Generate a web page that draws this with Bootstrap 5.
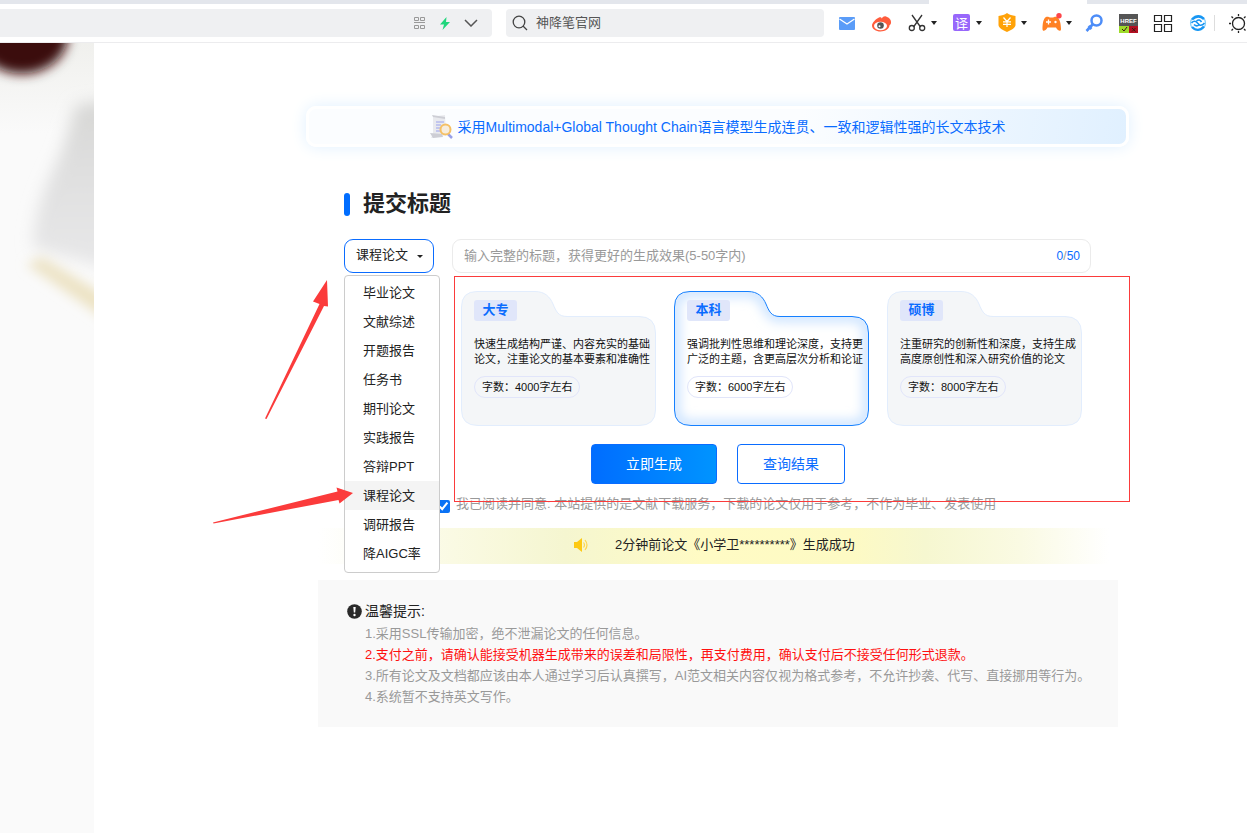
<!DOCTYPE html>
<html lang="zh-CN">
<head>
<meta charset="utf-8">
<meta name="viewport" content="width=device-width, initial-scale=1">
<title>提交标题</title>
<link href="https://cdn.jsdelivr.net/npm/bootstrap@5.3.0/dist/css/bootstrap.min.css" rel="stylesheet">
<style>
  body { font-family: "Liberation Sans", "Noto Sans CJK SC", sans-serif; font-size: 13px; line-height: 20px; color: #222; background: #fff; overflow-x: hidden; }
  button, input { font-family: inherit; }
  /* browser bar */
  .tab-strip { height: 4px; background: #e3e6ec; }
  .tab-strip .tab-active { width: 158px; margin-right: 160px; background: #fff; }
  .toolbar { height: 39px; border-bottom: 1px solid #ececee; overflow: hidden; }
  .field { height: 28px; background: #eff0f2; border-radius: 4px; }
  .address { border-radius: 0 4px 4px 0; padding-right: 14px; gap: 14px; margin-right: 14px; }
  .address svg, .tool svg, .field svg { display: block; flex: none; }
  .search-field { width: 318px; padding-left: 6px; gap: 8px; margin-right: 13px; color: #555; }
  .search-field input { font-size: 13px; color: #555; outline: 0; }
  .tool { border: 0; background: none; padding: 0; display: flex; align-items: center; gap: 4px; }
  .tool-group { gap: 15px; }
  .tool-caret { border: 3px solid transparent; border-top: 4px solid #222; border-bottom: 0; }
  .tool-rule { width: 1px; height: 16px; background: #ddd; margin: 0 13px 0 6px; }
  /* page */
  .photo { width: 94px; flex: none; background: #fafafa; min-height: calc(100vh - 43px); overflow: hidden; }
  .photo svg { display: block; }
  .page-main { padding: 63px 118px 0 212px; min-width: 0; }
  .promo { height: 41px; border: 3px solid #fff; border-radius: 10px; font-size: 14px; color: #0a6cff; gap: 4px;
    background: linear-gradient(100deg, #fbfdff 0%, #fbfdff 60%, #e0f0ff 100%); box-shadow: 0 0 16px #e0f0ff; }
  .submit-area { padding: 44px 0 0 38px; }
  .submit-title { font-size: 22px; line-height: 26px; font-weight: 700; gap: 13px; margin-bottom: 22px; }
  .submit-title::before { content: ""; width: 6px; height: 23px; border-radius: 3px; background: #006dff; }
  .kind-btn { width: 90px; height: 34px; padding: 0 0 3px 11px; font-size: 13px; border: 1px solid #0a6cff; border-radius: 9px; background: #fff; color: #222; text-align: left; }
  .kind-btn::after { margin-left: 9px; border-width: 3px; border-bottom: 0; vertical-align: 1px; }
  .kind-menu { top: 36px; left: 0; width: 96px; min-width: 0; padding: 2px 0 4px; border: 1px solid #ccc; border-radius: 4px; font-size: 13px; }
  .kind-menu .dropdown-item { padding: 4px 0 4px 18px; line-height: 21px; color: #222; }
  .kind-menu .dropdown-item.current { background: #f4f4f4; }
  .title-field { height: 34px; border: 1px solid #ebebeb; border-radius: 9px; padding: 0 10px 1px 11px; margin: 0 38px 0 18px; }
  .title-field input { outline: 0; color: #222; min-width: 0; }
  .title-field input::placeholder { color: #999; opacity: 1; }
  .count { color: #0a6cff; font-size: 12px; }
  .count i { color: #999; font-style: normal; }
  .levels { gap: 18px; padding: 18px 0 18px 117px; }
  .level { width: 195px; height: 135px; padding: 9px 8px 0 13px; border: 0; background: none; color: #111; text-align: left; font-size: 11px; line-height: 15px; }
  .level > svg { left: 0; top: 0; z-index: -1; }
  .level-name { width: 43px; height: 21px; line-height: 20px; border-radius: 3px; background: #e0e6fa; color: #0a6cff; font-size: 13px; font-weight: 700; text-align: center; }
  .level-text { margin: 16px 0 9px; width: 177px; }
  .level-size { height: 22px; line-height: 20px; padding: 0 7px; border: 1px solid #e1e5fa; border-radius: 11px; }
  .actions { gap: 20px; padding-left: 247px; }
  .actions .btn { height: 40px; padding: 0; font-size: 14px; border: 1px solid #0a6cff; border-radius: 4px; }
  .btn-make { width: 126px; color: #fff; background: linear-gradient(90deg, #006dff, #0094ff); }
  .btn-find { width: 108px; color: #0a6cff; background: #fff; }
  .agree { padding-left: 93px; margin-top: 10px; gap: 6px; color: #999; }
  .agree input { width: 13px; height: 13px; margin: 5px 0 0; accent-color: #0a72f5; }
  .ticker { height: 36px; margin: 14px 12px 0; padding: 0 0 2px 256px; gap: 27px; background: linear-gradient(90deg, #fff 0%, #fafae3 17%, #f5f6d0 31%, #fffbc4 48%, #fdfac4 67%, #f6f7d0 76%, #fafae3 88%, #fff 99%); }
  .tips { margin: 16px 11px 0 12px; padding: 21px 24px 20px 29px; background: #f9f9f9; color: #999; line-height: 21px; }
  .tips h2 { font-size: 14px; line-height: 21px; margin: 0; gap: 3px; color: #222; font-weight: 400; }
  .tips ol { list-style: none; margin: 1px 0 0; padding: 0 0 0 18px; }
  .tips .warn { color: #f11; }
  /* hand-drawn marks over the form */
  .mark-box { left: 110px; right: -1px; top: 37px; height: 226px; border: 1px solid #fb3b3b; pointer-events: none; z-index: 1010; }
  .mark-arrows { left: -132px; top: 40px; z-index: 1020; pointer-events: none; }
</style>
</head>
<body>
<header>
  <div class="tab-strip d-flex justify-content-end"><div class="tab-active"></div></div>
  <div class="toolbar d-flex align-items-center">
    <div class="field address d-flex align-items-center justify-content-end flex-grow-1">
      <svg width="13" height="12" viewBox="0 0 13 12" fill="none" stroke="#999"><path d="M1.500.5h4v3h-4zM7.500.5h4v3h-4zM1.500 8.500h4v3h-4zM7.500 8.500h4v3h-4zM1 5.500h11"/></svg>
      <svg width="10" height="13" viewBox="0 0 10 13" fill="#1fd67c"><path d="M6.500 0 0 7.500h4L2.500 13 10 5H6z"/></svg>
      <svg width="14" height="8" viewBox="0 0 14 8" fill="none" stroke="#555" stroke-width="1.500"><path d="m1 1 6 6 6-6"/></svg>
    </div>
    <label class="field search-field d-flex align-items-center">
      <svg width="16" height="16" viewBox="0 0 16 16" fill="none" stroke="#444" stroke-width="1.300"><circle cx="7" cy="7" r="5.800"/><path d="m11 11 4 4"/></svg>
      <input class="border-0 bg-transparent p-0 flex-grow-1" type="text" value="神降笔官网" aria-label="搜索">
    </label>
    <div class="tool-group d-flex align-items-center">
      <button class="tool" aria-label="邮件"><svg width="20" height="20" viewBox="0 0 20 20"><rect x="2" y="4" width="16" height="13" rx="1" fill="#5a9cf8"/><path d="m2.500 6 7.500 5 7.500-5" fill="none" stroke="#fff" stroke-width="1.200"/></svg></button>
      <button class="tool" aria-label="微博"><svg width="20" height="20" viewBox="0 0 20 20"><path d="M0 12.500C0 10 3.500 6 7 4.500c1.500-.6 2.500 0 2.700 1C11 3.500 12.500 3 14 3.500c3 .8 5.500 3.500 5 6.500-.3 1.500-1 2-1.500 2.300C17.500 16 13 18.500 8.500 18.500S0 16 0 12.500z" fill="#ff5c3c"/><ellipse cx="8.500" cy="13" rx="6.500" ry="4.200" fill="#fff"/><circle cx="8.500" cy="12.500" r="3.300" fill="#555"/><circle cx="7.500" cy="13.200" r="1" fill="#fff"/></svg></button>
      <button class="tool" aria-label="截图"><svg width="20" height="20" viewBox="0 0 20 20" fill="none" stroke="#333" stroke-width="1.300"><path d="m5 2 8.500 12M15 2 6.500 14"/><circle cx="4.800" cy="15" r="2.500"/><circle cx="15.200" cy="15" r="2.500"/></svg><span class="tool-caret"></span></button>
      <button class="tool" aria-label="翻译"><svg width="20" height="20" viewBox="0 0 20 20"><rect x="1" y="1" width="17" height="17" rx="2" fill="#9867fb"/><text x="9.500" y="14.500" text-anchor="middle" font-size="13" fill="#fff">译</text></svg><span class="tool-caret"></span></button>
      <button class="tool" aria-label="钱包"><svg width="20" height="20" viewBox="0 0 20 20"><path d="M10 0c2.500 1.800 5 2.600 8.500 3v9c0 3-4.500 5-8.500 7-4-2-8.500-4-8.500-7V3C5 2.600 7.500 1.800 10 0z" fill="#ffa208"/><path d="m6.500 4.500 3.500 4 3.500-4M6 8.800h8M6 11.300h8M10 8.500V14" fill="none" stroke="#fff" stroke-width="1.200"/></svg><span class="tool-caret"></span></button>
      <button class="tool" aria-label="游戏"><svg width="20" height="20" viewBox="0 0 20 20"><path d="M4 4c2-.8 3 .5 5.500.5S13 3.200 15 4c3 1.500 4 8 4 12 0 3-3 2-5-1.500H5.500C3.500 18 .5 19 .5 16 .5 12 1 5.500 4 4z" fill="#ff8124"/><path d="M6.500 6.500v5M4 9h5" stroke="#fff" stroke-width="1.300"/><circle cx="13.500" cy="9" r="1.200" fill="#fff"/><circle cx="17" cy="2.800" r="2.700" fill="#fd464a"/></svg><span class="tool-caret"></span></button>
    </div>
    <div class="tool-group d-flex align-items-center ms-2 ps-1">
      <button class="tool" aria-label="密码"><svg width="20" height="20" viewBox="0 0 20 20" fill="none" stroke="#4d8df8"><circle cx="12.500" cy="7.500" r="5" stroke-width="2.500"/><path d="m9 11-6.500 7M4.500 13l3 3" stroke-width="2.600"/></svg></button>
      <button class="tool" aria-label="HREF"><svg width="19" height="20" viewBox="0 0 19 20"><path fill="#555" d="M0 1h19v12H0z"/><path fill="#9edb2a" d="M0 13h10v7H0z"/><path fill="#b40f22" d="M10 13h9v7h-9z"/><text x="9.500" y="10" text-anchor="middle" font-size="6" font-weight="700" fill="#fff">HREF</text><path d="m3 16 2 2 3-4M13 15l3.500 3.500m0-3.500L13 18.500" fill="none" stroke="#3a1a10"/></svg></button>
      <button class="tool" aria-label="应用"><svg width="20" height="20" viewBox="0 0 20 20" fill="none" stroke="#222" stroke-width="1.200"><path d="M1.500 2.500h7v6h-7zM11.500 2.500h7v6h-7zM1.500 11.500h7v7h-7zM11.500 11.500h7v7h-7z"/></svg></button>
      <button class="tool" aria-label="同步"><svg width="20" height="20" viewBox="0 0 20 20" fill="none" stroke="#1795f3"><circle cx="10" cy="10" r="7.500" stroke="#7fcdfa" stroke-width="1.200"/><path d="M4 6.500Q10 .5 16 6M4 14q6 6 12-.5" stroke-width="2.400"/><path d="M3.500 10q3-3.500 6 0l2 2q2.500 1 5-2M8.500 8q3-2.500 5 1M6 11.500q2.500 2.500 5 .5" stroke-width="1.600"/></svg></button>
    </div>
    <div class="tool-rule"></div>
    <button class="tool" aria-label="亮度"><svg width="19" height="20" viewBox="0 0 19 20" fill="none" stroke="#222" stroke-width="1.300"><circle cx="10.500" cy="10.500" r="6"/><path d="M10.500 1v2M10.500 18v2M1 10.500h2M3.500 3.500 5 5M3.500 17.500 5 16M17.500 3.500 16 5M17.500 17.500 16 16"/></svg></button>
  </div>
</header>

<div class="d-flex">
  <aside class="photo" aria-hidden="true">
    <svg width="94" height="320" viewBox="0 0 94 320">
      <defs>
        <filter id="soft" x="-50%" y="-50%" width="200%" height="200%"><feGaussianBlur stdDeviation="6"/></filter>
        <filter id="softer" x="-50%" y="-50%" width="200%" height="200%"><feGaussianBlur stdDeviation="8"/></filter>
        <linearGradient id="top" x2="0" y2="1"><stop stop-color="#f0f0ed"/><stop offset="1" stop-color="#fafafa"/></linearGradient>
        <linearGradient id="paper" x2="0" y2="1"><stop stop-color="#d6d6d4"/><stop offset=".4" stop-color="#dfdfdf"/><stop offset="1" stop-color="#e8e8e9"/></linearGradient>
      </defs>
      <path fill="url(#top)" d="M0 0h94v90H0z"/>
      <path d="M76 62 125 55v175l-92-25c0-35 12-60 28-95z" fill="url(#paper)" filter="url(#softer)"/>
      <path d="M34 222 110 275v-15L42 218z" fill="#ecdfb8" stroke="#ede4c8" stroke-width="8" filter="url(#soft)"/>
      <ellipse cx="22" cy="-8" rx="46" ry="39" fill="#3b0a08" filter="url(#soft)"/>
    </svg>
  </aside>

  <main class="page-main flex-grow-1">
    <div class="promo d-flex align-items-center justify-content-center">
      <svg width="24" height="26" viewBox="0 0 24 26"><path d="M3 2.500 15 1l1 20-13 3H1l2-4z" fill="#e9eaee"/><path d="M2 1 15 3v2L3 3zM0 19l3 5 10-1-1-3z" fill="#cdced5"/><path d="M6 8h8M6 11h5M6 14h4M6 17h5" stroke="#9aa2ee"/><path d="m18 20 4 4" stroke="#98a0e8" stroke-width="2.500"/><circle cx="15.500" cy="15.500" r="5" fill="#f7eddd" stroke="#f5c065" stroke-width="2"/></svg>
      <span>采用Multimodal+Global Thought Chain语言模型生成连贯、一致和逻辑性强的长文本技术</span>
    </div>

    <form class="submit-area" onsubmit="return false">
      <h1 class="submit-title d-flex align-items-center mt-0">提交标题</h1>
      <div class="position-relative">
        <div class="d-flex">
          <div class="dropdown">
            <button type="button" class="kind-btn dropdown-toggle" aria-expanded="true">课程论文</button>
            <ul class="dropdown-menu kind-menu show">
              <li><a class="dropdown-item" href="#">毕业论文</a></li>
              <li><a class="dropdown-item" href="#">文献综述</a></li>
              <li><a class="dropdown-item" href="#">开题报告</a></li>
              <li><a class="dropdown-item" href="#">任务书</a></li>
              <li><a class="dropdown-item" href="#">期刊论文</a></li>
              <li><a class="dropdown-item" href="#">实践报告</a></li>
              <li><a class="dropdown-item" href="#">答辩PPT</a></li>
              <li><a class="dropdown-item current" href="#">课程论文</a></li>
              <li><a class="dropdown-item" href="#">调研报告</a></li>
              <li><a class="dropdown-item" href="#">降AIGC率</a></li>
            </ul>
          </div>
          <label class="title-field d-flex align-items-center flex-grow-1">
            <input class="border-0 p-0 flex-grow-1" type="text" maxlength="50" placeholder="输入完整的标题，获得更好的生成效果(5-50字内)" aria-label="标题">
            <span class="count">0<i>/</i>50</span>
          </label>
        </div>

        <div class="levels d-flex">
          <button type="button" class="level position-relative z-0 d-flex flex-column align-items-start">
            <svg class="position-absolute" width="195" height="135" viewBox="0 0 195 135"><path d="M16 .5H74C84 .5 89 6 92 13S97 25.500 106 25.500H178Q194.500 25.500 194.500 42V119Q194.500 134.500 178 134.500H17Q.5 134.500.5 119V16Q.5.5 16 .5z" fill="#f4f6f8" stroke="#e2edfd"/></svg>
            <span class="level-name">大专</span>
            <span class="level-text">快速生成结构严谨、内容充实的基础论文，注重论文的基本要素和准确性</span>
            <span class="level-size">字数：4000字左右</span>
          </button>
          <button type="button" class="level position-relative z-0 d-flex flex-column align-items-start" aria-pressed="true">
            <svg class="position-absolute" width="195" height="135" viewBox="0 0 195 135">
              <defs>
                <clipPath id="folder"><path d="M16 .5H74C84 .5 89 6 92 13S97 25.500 106 25.500H178Q194.500 25.500 194.500 42V119Q194.500 134.500 178 134.500H17Q.5 134.500.5 119V16Q.5.5 16 .5z"/></clipPath>
              </defs>
              <g clip-path="url(#folder)"><path fill="#fff" d="M0 0h195v135H0z"/><path d="M16 .5H74C84 .5 89 6 92 13S97 25.500 106 25.500H178Q194.500 25.500 194.500 42V119Q194.500 134.500 178 134.500H17Q.5 134.500.5 119V16Q.5.5 16 .5z" fill="none" stroke="#c6e0ff" stroke-width="10" filter="url(#soft)"/></g>
              <path d="M16 .5H74C84 .5 89 6 92 13S97 25.500 106 25.500H178Q194.500 25.500 194.500 42V119Q194.500 134.500 178 134.500H17Q.5 134.500.5 119V16Q.5.5 16 .5z" fill="none" stroke="#1580ff"/>
            </svg>
            <span class="level-name">本科</span>
            <span class="level-text">强调批判性思维和理论深度，支持更广泛的主题，含更高层次分析和论证</span>
            <span class="level-size">字数：6000字左右</span>
          </button>
          <button type="button" class="level position-relative z-0 d-flex flex-column align-items-start">
            <svg class="position-absolute" width="195" height="135" viewBox="0 0 195 135"><path d="M16 .5H74C84 .5 89 6 92 13S97 25.500 106 25.500H178Q194.500 25.500 194.500 42V119Q194.500 134.500 178 134.500H17Q.5 134.500.5 119V16Q.5.5 16 .5z" fill="#f4f6f8" stroke="#e2edfd"/></svg>
            <span class="level-name">硕博</span>
            <span class="level-text">注重研究的创新性和深度，支持生成高度原创性和深入研究价值的论文</span>
            <span class="level-size">字数：8000字左右</span>
          </button>
        </div>

        <div class="actions d-flex">
          <button type="submit" class="btn btn-make">立即生成</button>
          <button type="button" class="btn btn-find">查询结果</button>
        </div>

        <label class="agree d-flex align-items-center"><input type="checkbox" checked><span>我已阅读并同意: 本站提供的是文献下载服务，下载的论文仅用于参考，不作为毕业、发表使用</span></label>

        <div class="mark-box position-absolute"></div>
        <svg class="mark-arrows position-absolute" width="144" height="248" viewBox="0 0 144 248" fill="#fb3b3b">
          <path d="M115 1 101 22.500l6.500 2.500L53 139.500l1.500.5L112 27l4 .5z"/>
          <path d="M141 214 124.500 208.500l1 4L1 243.500l.5 1L126.500 221l1 3.500z"/>
        </svg>
      </div>
    </form>

    <div class="ticker d-flex align-items-center">
      <svg width="14" height="14" viewBox="0 0 14 14" fill="#fdc913"><path d="M0 4h3l5-4v14l-5-4H0z"/><path d="M9.500 4.500q2 2.500 0 5M11 2q4 5 0 10" fill="none" stroke="#fdd54e" stroke-width="1.200"/></svg>
      <span>2分钟前论文《小学卫**********》生成成功</span>
    </div>

    <section class="tips">
      <h2 class="d-flex align-items-center"><svg width="15" height="15" viewBox="0 0 15 15"><circle cx="7.500" cy="7.500" r="7.300" fill="#2a2a2a"/><path d="M6.300 3h2.400l-.5 5.500H6.800z" fill="#fff"/><circle cx="7.500" cy="11" r="1.200" fill="#fff"/></svg>温馨提示:</h2>
      <ol>
        <li>1.采用SSL传输加密，绝不泄漏论文的任何信息。</li>
        <li class="warn">2.支付之前，请确认能接受机器生成带来的误差和局限性，再支付费用，确认支付后不接受任何形式退款。</li>
        <li>3.所有论文及文档都应该由本人通过学习后认真撰写，AI范文相关内容仅视为格式参考，不允许抄袭、代写、直接挪用等行为。</li>
        <li>4.系统暂不支持英文写作。</li>
      </ol>
    </section>
  </main>
</div>
<script src="https://cdn.jsdelivr.net/npm/bootstrap@5.3.0/dist/js/bootstrap.bundle.min.js"></script>
</body>
</html>
